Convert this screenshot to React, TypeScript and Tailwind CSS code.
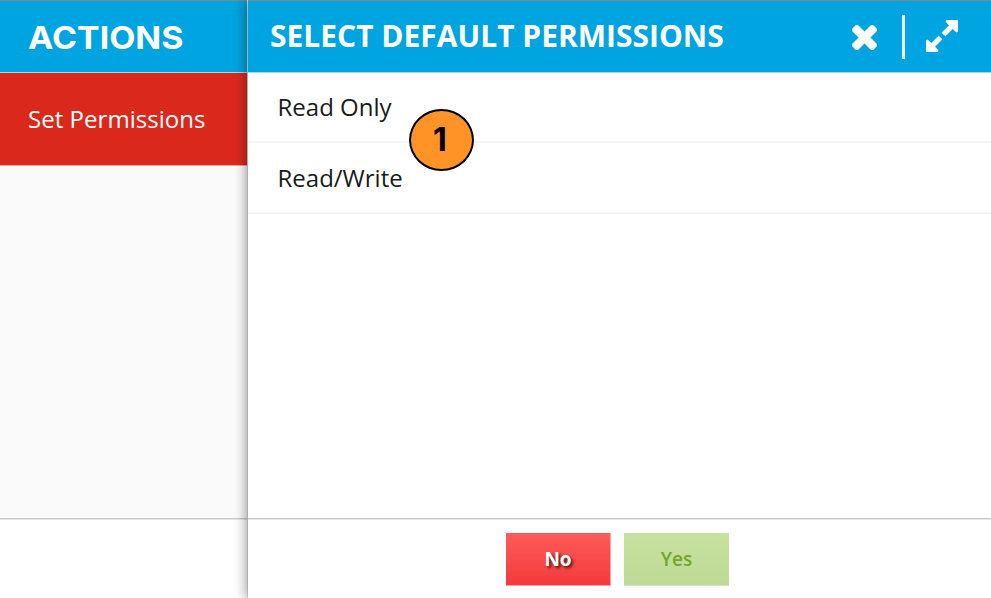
function CloseIcon() {
  return (
    <svg className="h-[25px] w-[25px]" viewBox="302 302 1188 1188" fill="white" stroke="white" strokeWidth="20" preserveAspectRatio="none">
      <path transform="translate(0 -64)" d="M1490 1322q0 40-28 68l-136 136q-28 28-68 28t-68-28l-294-294-294 294q-28 28-68 28t-68-28l-136-136q-28-28-28-68t28-68l294-294-294-294q-28-28-28-68t28-68l136-136q28-28 68-28t68 28l294 294 294-294q28-28 68-28t68 28l136 136q28 28 28 68t-28 68l-294 294 294 294q28 28 28 68z" />
    </svg>
  );
}

function ExpandIcon() {
  return (
    <svg className="h-8 w-8" viewBox="128 128 1536 1536" fill="white" stroke="white" strokeWidth="36">
      <path d="M883 1056q0 13-10 23l-332 332 144 144q19 19 19 45t-19 45-45 19h-448q-26 0-45-19t-19-45v-448q0-26 19-45t45-19 45 19l144 144 332-332q10-10 23-10t23 10l114 114q10 10 10 23zm781-864v448q0 26-19 45t-45 19-45-19l-144-144-332 332q-10 10-23 10t-23-10l-114-114q-10-10-10-23t10-23l332-332-144-144q-19-19-19-45t19-45 45-19h448q26 0 45 19t19 45z" />
    </svg>
  );
}

function Sidebar() {
  return (
    <aside className="flex w-[247px] shrink-0 flex-col">
      <header className="h-[73px] border-t border-b border-t-[#858585] border-b-[#a9d8ec] bg-[#00a4e0] pt-[19px] pl-7">
        <h2 className="origin-left scale-x-[1.095] font-['Inter'] text-[31px] leading-9 font-bold whitespace-nowrap text-white">ACTIONS</h2>
      </header>
      <div className="h-[93px] border-b border-[#e5a5a0] bg-[#da291c] pt-[30px] pl-7">
        <span className="text-2xl leading-8 tracking-[0.04px] text-white">Set Permissions</span>
      </div>
      <div className="flex-1 border-b border-[#c9c9c9] bg-[#fafafa]" />
      <div className="h-[79px] border-t border-[#e6e6e6] bg-white" />
    </aside>
  );
}

export default function App() {
  return (
    <main className="relative flex h-[598px] w-[991px] overflow-hidden bg-white font-['Open_Sans',sans-serif]">
      <Sidebar />
      <section className="z-10 flex flex-1 flex-col border-l border-[#00000018] bg-white bg-clip-padding shadow-[0_0_12px_rgba(0,0,0,0.45)]">
        <header className="flex h-[73px] shrink-0 border-t border-b border-t-[#858585] border-b-[#a9d8ec] bg-[#00a4e0] pl-[22px]">
          <h1 className="w-[581.5px] pt-[15px] text-[30px] leading-10 font-bold whitespace-nowrap text-white">SELECT DEFAULT PERMISSIONS</h1>
          <button className="mt-6 h-[25px]" aria-label="Close"><CloseIcon /></button>
          <div className="mt-3.5 ml-[25px] h-11 w-[3px] bg-[#edf1f3]" />
          <button className="mt-[19px] ml-[21.5px] h-8" aria-label="Expand"><ExpandIcon /></button>
        </header>
        <ul className="flex-1 border-b border-[#c9c9c9] text-2xl leading-8 text-[#1a1a1a]">
          <li className="h-[70px] border-b-2 border-[#f5f5f5] pt-[18px] pl-[29.5px]">Read Only</li>
          <li className="h-[71px] border-b-2 border-[#f5f5f5] pt-[19px] pl-[29.5px]">Read/Write</li>
        </ul>
        <footer className="flex h-[79px] gap-[13px] border-t border-[#e6e6e6] pt-[13px] pl-[258px] text-[19px] font-semibold">
          <button className="h-[53px] w-[105px] border-r border-b border-[#fba3a3] bg-linear-to-b from-[#fc5b58] to-[#f5383d] font-bold text-white [text-shadow:2px_2px_3px_rgba(0,0,0,0.7)]">No</button>
          <button className="h-[53px] w-[105px] border-b border-[#d5e6bd] bg-linear-to-b from-[#c6e29d] to-[#bfd998] text-[#73a62c]">Yes</button>
        </footer>
      </section>
      <div className="absolute top-[109px] left-[409px] z-20 flex h-[62px] w-[65px] items-center justify-center rounded-[50%] border-2 border-black bg-[#ff9326] pr-[3px] font-['Inter'] text-[32px] font-bold text-black">1</div>
    </main>
  );
}
